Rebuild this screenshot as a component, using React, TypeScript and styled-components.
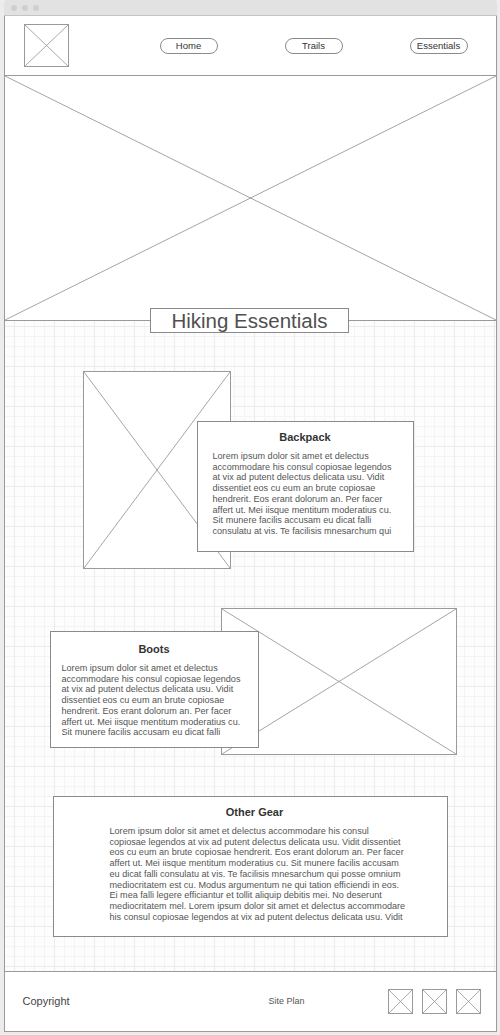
import styled, { createGlobalStyle } from "styled-components";

const lineColor = "#9a9a9a";
const textColor = "#555";
const loremShort =
  "Lorem ipsum dolor sit amet et delectus accommodare his consul copiosae legendos at vix ad putent delectus delicata usu. Vidit dissentiet eos cu eum an brute copiosae hendrerit. Eos erant dolorum an. Per facer affert ut. Mei iisque mentitum moderatius cu. Sit munere facilis accusam eu dicat falli";
const loremBackpack = loremShort + " consulatu at vis. Te facilisis mnesarchum qui";
const loremLongLines = [
  "Lorem ipsum dolor sit amet et delectus accommodare his consul",
  "copiosae legendos at vix ad putent delectus delicata usu. Vidit dissentiet",
  "eos cu eum an brute copiosae hendrerit. Eos erant dolorum an. Per facer",
  "affert ut. Mei iisque mentitum moderatius cu. Sit munere facilis accusam",
  "eu dicat falli consulatu at vis. Te facilisis mnesarchum qui posse omnium",
  "mediocritatem est cu. Modus argumentum ne qui tation efficiendi in eos.",
  "Ei mea falli legere efficiantur et tollit aliquip debitis mei. No deserunt",
  "mediocritatem mel. Lorem ipsum dolor sit amet et delectus accommodare",
  "his consul copiosae legendos at vix ad putent delectus delicata usu. Vidit",
];

const GlobalStyle = createGlobalStyle`
  html, body {
    margin: 0;
    padding: 0;
    background: #ececec;
    font-family: "Liberation Sans", Arial, sans-serif;
  }
`;

const Window = styled.div`
  width: 493px;
  margin: 0 auto;
  height: 1035px;
  display: flex;
  flex-direction: column;
`;

const Chrome = styled.div`
  height: 16px;
  flex-shrink: 0;
  background: #e2e2e2;
  border-radius: 4px 4px 0 0;
  border-bottom: 1px solid #c4c4c4;
  display: flex;
  align-items: center;
  gap: 5px;
  padding-left: 7px;
  box-sizing: border-box;

  span {
    width: 6px;
    height: 6px;
    border-radius: 50%;
    background: #cfcfcf;
  }
`;

const Frame = styled.div`
  border-left: 1px solid ${lineColor};
  border-right: 1px solid ${lineColor};
  display: flex;
  flex-direction: column;
`;

const Header = styled.header`
  height: 59px;
  background: #fff;
  border-bottom: 1px solid ${lineColor};
  display: flex;
  align-items: center;
  padding: 0 28px 0 19px;
`;

const Nav = styled.nav`
  margin-left: auto;
  display: flex;
  gap: 67px;
`;

const NavButton = styled.span`
  width: 58px;
  height: 16px;
  border: 1px solid #8a8a8a;
  border-radius: 8px;
  box-sizing: border-box;
  display: flex;
  align-items: center;
  justify-content: center;
  font-size: 9.5px;
  color: #333;
`;

const Placeholder = styled.div<{ $w: number; $h: number }>`
  width: ${(p) => p.$w}px;
  height: ${(p) => p.$h}px;
  flex-shrink: 0;
  background: #fff;
  border: 1px solid ${lineColor};
  box-sizing: border-box;
  position: relative;

  svg {
    position: absolute;
    inset: 0;
    width: 100%;
    height: 100%;
  }
`;

const CrossBox = ({ w, h }: { w: number; h: number }) => (
  <Placeholder $w={w} $h={h}>
    <svg viewBox={`0 0 ${w} ${h}`} preserveAspectRatio="none">
      <line x1="0" y1="0" x2={w} y2={h} stroke="#8d8d8d" strokeWidth="0.8" />
      <line x1={w} y1="0" x2="0" y2={h} stroke="#8d8d8d" strokeWidth="0.8" />
    </svg>
  </Placeholder>
);

const Hero = styled.div`
  height: 244px;
  background: #fff;
  border-bottom: 1px solid ${lineColor};
  position: relative;

  svg {
    position: absolute;
    inset: 0;
    width: 100%;
    height: 100%;
  }
`;

const Canvas = styled.main`
  height: 650px;
  background-color: #fdfdfd;
  background-image:
    linear-gradient(#ececec 1px, transparent 1px),
    linear-gradient(90deg, #ececec 1px, transparent 1px),
    linear-gradient(#f4f4f4 1px, transparent 1px),
    linear-gradient(90deg, #f4f4f4 1px, transparent 1px);
  background-size: 40px 40px, 40px 40px, 10px 10px, 10px 10px;
  background-position: 9px 5px, 9px 5px, 9px 5px, 9px 5px;
  display: flex;
  flex-direction: column;
`;

const Title = styled.h1`
  align-self: center;
  margin: -13px 0 0 -1px;
  width: 199px;
  height: 25px;
  box-sizing: border-box;
  border: 1px solid #8a8a8a;
  background: #fff;
  font-weight: normal;
  font-size: 20.5px;
  line-height: 23px;
  text-align: center;
  color: #505050;
  position: relative;
  z-index: 1;
`;

const Feature = styled.section<{ $pad: number; $top: number }>`
  display: flex;
  align-items: flex-start;
  padding-left: ${(p) => p.$pad}px;
  margin-top: ${(p) => p.$top}px;
`;

const Card = styled.div<{
  $w: number;
  $h: number;
  $top: number;
  $pad: number;
  $padRight?: number;
  $titleShift?: number;
}>`
  width: ${(p) => p.$w}px;
  height: ${(p) => p.$h}px;
  margin-top: ${(p) => p.$top}px;
  flex-shrink: 0;
  box-sizing: border-box;
  padding: 9px ${(p) => p.$padRight ?? p.$pad}px 0 ${(p) => p.$pad}px;
  background: #fff;
  border: 1px solid #8a8a8a;
  position: relative;
  z-index: 1;
  color: ${textColor};

  h2 {
    margin: 0 ${(p) => p.$titleShift ?? 0}px 8px 0;
    font-size: 11px;
    font-weight: bold;
    text-align: center;
    color: #333;
  }

  p {
    margin: 0;
    font-size: 9.1px;
    line-height: 10.7px;
  }
`;

const Overlap = styled.div<{ $left: number }>`
  margin-left: ${(p) => p.$left}px;
`;

const Footer = styled.footer`
  height: 59px;
  background: #fff;
  border: 1px solid ${lineColor};
  border-width: 1px 0;
  display: flex;
  align-items: center;
  padding: 0 15px 0 18px;
`;

const Copyright = styled.span`
  font-size: 11px;
  color: #444;
  width: 246px;
  margin-top: -2px;
`;

const SitePlan = styled.span`
  font-size: 9px;
  color: #555;
  margin-top: -2px;
`;

const Socials = styled.div`
  margin-left: auto;
  display: flex;
  gap: 9px;
`;

export default function App() {
  return (
    <>
      <GlobalStyle />
      <Window>
        <Chrome>
          <span />
          <span />
          <span />
        </Chrome>
        <Frame>
          <Header>
            <CrossBox w={45} h={43} />
            <Nav>
              <NavButton>Home</NavButton>
              <NavButton>Trails</NavButton>
              <NavButton>Essentials</NavButton>
            </Nav>
          </Header>
          <Hero>
            <svg viewBox="0 0 491 244" preserveAspectRatio="none">
              <line x1="0" y1="0" x2="491" y2="244" stroke="#8d8d8d" strokeWidth="0.8" />
              <line x1="491" y1="0" x2="0" y2="244" stroke="#8d8d8d" strokeWidth="0.8" />
            </svg>
          </Hero>
          <Canvas>
            <Title>Hiking Essentials</Title>

            <Feature $pad={78} $top={38}>
              <CrossBox w={148} h={198} />
              <Overlap $left={-34}>
                <Card $w={217} $h={131} $top={50} $pad={15}>
                  <h2>Backpack</h2>
                  <p>{loremBackpack}</p>
                </Card>
              </Overlap>
            </Feature>

            <Feature $pad={45} $top={39}>
              <Card $w={209} $h={117} $top={23} $pad={11}>
                <h2 style={{ marginTop: 2 }}>Boots</h2>
                <p>{loremShort}</p>
              </Card>
              <Overlap $left={-38}>
                <CrossBox w={236} h={147} />
              </Overlap>
            </Feature>

            <Feature $pad={48} $top={41}>
              <Card $w={395} $h={141} $top={0} $pad={56} $padRight={36} $titleShift={11}>
                <h2>Other Gear</h2>
                <p>
                  {loremLongLines.map((line, i) => (
                    <span key={i}>
                      {line}
                      {i < loremLongLines.length - 1 && <br />}
                    </span>
                  ))}
                </p>
              </Card>
            </Feature>
          </Canvas>
          <Footer>
            <Copyright>Copyright</Copyright>
            <SitePlan>Site Plan</SitePlan>
            <Socials>
              <CrossBox w={25} h={25} />
              <CrossBox w={25} h={25} />
              <CrossBox w={25} h={25} />
            </Socials>
          </Footer>
        </Frame>
      </Window>
    </>
  );
}
